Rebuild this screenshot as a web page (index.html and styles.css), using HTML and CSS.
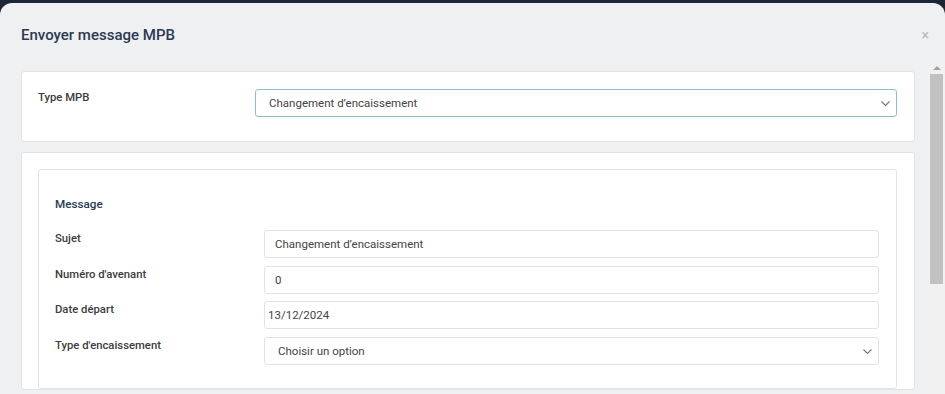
FILE: index.html
```html
<!DOCTYPE html>
<html lang="fr">
<head>
    <meta charset="UTF-8">
    <meta name="viewport" content="width=device-width, initial-scale=1.0">
    <title>Envoyer message MPB</title>
    <link rel="stylesheet" href="styles.css">
</head>
<body>
    <div class="modal">
        <div class="modal-header">
            <h2 class="modal-title">Envoyer message MPB</h2>
            <span class="close">&times;</span>
        </div>

        <div class="modal-body">
            <div class="content">
                <div class="card">
                    <div class="row row-type">
                        <label for="typeMpb">Type MPB</label>
                        <div class="select-wrap">
                            <select id="typeMpb" class="field field-focus">
                                <option>Changement d’encaissement</option>
                            </select>
                            <svg class="chevron" width="9" height="5" viewBox="0 0 9 5"><path d="M0.5 0.5l4 4 4-4" fill="none" stroke="#777" stroke-width="1.1"/></svg>
                        </div>
                    </div>
                </div>

                <div class="card card-main">
                    <div class="inner">
                        <h3 class="section-title">Message</h3>

                        <div class="row">
                            <label for="sujet">Sujet</label>
                            <input type="text" id="sujet" class="field" value="Changement d’encaissement">
                        </div>
                        <div class="row">
                            <label for="avenant">Numéro d'avenant</label>
                            <input type="text" id="avenant" class="field" value="0">
                        </div>
                        <div class="row">
                            <label for="dateDepart">Date départ</label>
                            <input type="text" id="dateDepart" class="field field-date" value="13/12/2024">
                        </div>
                        <div class="row">
                            <label for="typeEnc">Type d'encaissement</label>
                            <div class="select-wrap">
                                <select id="typeEnc" class="field field-select">
                                    <option>Choisir un option</option>
                                </select>
                                <svg class="chevron" width="9" height="5" viewBox="0 0 9 5"><path d="M0.5 0.5l4 4 4-4" fill="none" stroke="#777" stroke-width="1.1"/></svg>
                            </div>
                        </div>
                    </div>
                </div>
            </div>

            <div class="scrollbar">
                <span class="scroll-arrow"></span>
                <span class="scroll-thumb"></span>
            </div>
        </div>
    </div>
</body>
</html>
```

FILE: styles.css
```css
html, body {
    height: 100%;
}

body {
    margin: 0;
    padding-top: 3px;
    box-sizing: border-box;
    background-color: #1c2634;
    font-family: Roboto, "Liberation Sans", sans-serif;
    overflow: hidden;
}

.modal {
    height: 100%;
    background-color: #eff0f2;
    border-radius: 12px 12px 0 0;
    display: flex;
    flex-direction: column;
}

.modal-header {
    display: flex;
    justify-content: space-between;
    align-items: center;
    height: 60px;
    padding: 4px 16px 0 21px;
    box-sizing: border-box;
}

.modal-title {
    margin: 0;
    font-size: 15px;
    font-weight: 500;
    color: #2b3a50;
}

.close {
    color: #b5b7ba;
    font-size: 14px;
}

.modal-body {
    flex: 1;
    display: flex;
    min-height: 0;
}

.content {
    flex: 1;
    padding: 8px 13px 0 21px;
    overflow: hidden;
}

.card {
    background-color: #fff;
    border: 1px solid #e2e3e5;
    border-radius: 3px;
    padding: 17px 17px 24px 16px;
    margin-bottom: 10px;
}

.card-main {
    padding-top: 16px;
    padding-bottom: 0;
}

.inner {
    border: 1px solid #e2e3e5;
    border-radius: 3px;
    padding: 26px 17px 23px 16px;
}

.section-title {
    margin: 0 0 17px;
    font-size: 11.7px;
    font-weight: 500;
    color: #2b3a50;
    line-height: 17px;
}

.row {
    display: grid;
    grid-template-columns: 209px 1fr;
    margin-bottom: 7.5px;
}

.row:last-child {
    margin-bottom: 0;
}

.row-type {
    grid-template-columns: 217px 1fr;
}

label {
    padding-top: 1px;
    font-size: 11.3px;
    font-weight: 500;
    color: #3c3c3c;
    line-height: 16px;
}

.field {
    width: 100%;
    height: 28px;
    box-sizing: border-box;
    border: 1px solid #e1e2e4;
    border-radius: 3px;
    padding: 0 10px;
    font-family: inherit;
    font-size: 11.5px;
    color: #444;
    background-color: #fff;
    outline: none;
}

.field-focus {
    border-color: #8dc0cf;
    padding-left: 13px;
}

.field-date {
    padding-left: 3px;
}

select.field {
    appearance: none;
    -webkit-appearance: none;
}

.field-select {
    padding-left: 13px;
}

.select-wrap {
    position: relative;
}

.chevron {
    position: absolute;
    right: 7px;
    top: 12px;
    pointer-events: none;
}

.scrollbar {
    width: 17px;
    background-color: #f1f1f1;
    display: flex;
    flex-direction: column;
    align-items: center;
}

.scroll-arrow {
    margin-top: 3px;
    width: 0;
    height: 0;
    border-left: 4px solid transparent;
    border-right: 4px solid transparent;
    border-bottom: 4px solid #a3a3a3;
}

.scroll-thumb {
    margin-top: 4px;
    width: 13px;
    height: 210px;
    background-color: #c1c1c1;
}
```
